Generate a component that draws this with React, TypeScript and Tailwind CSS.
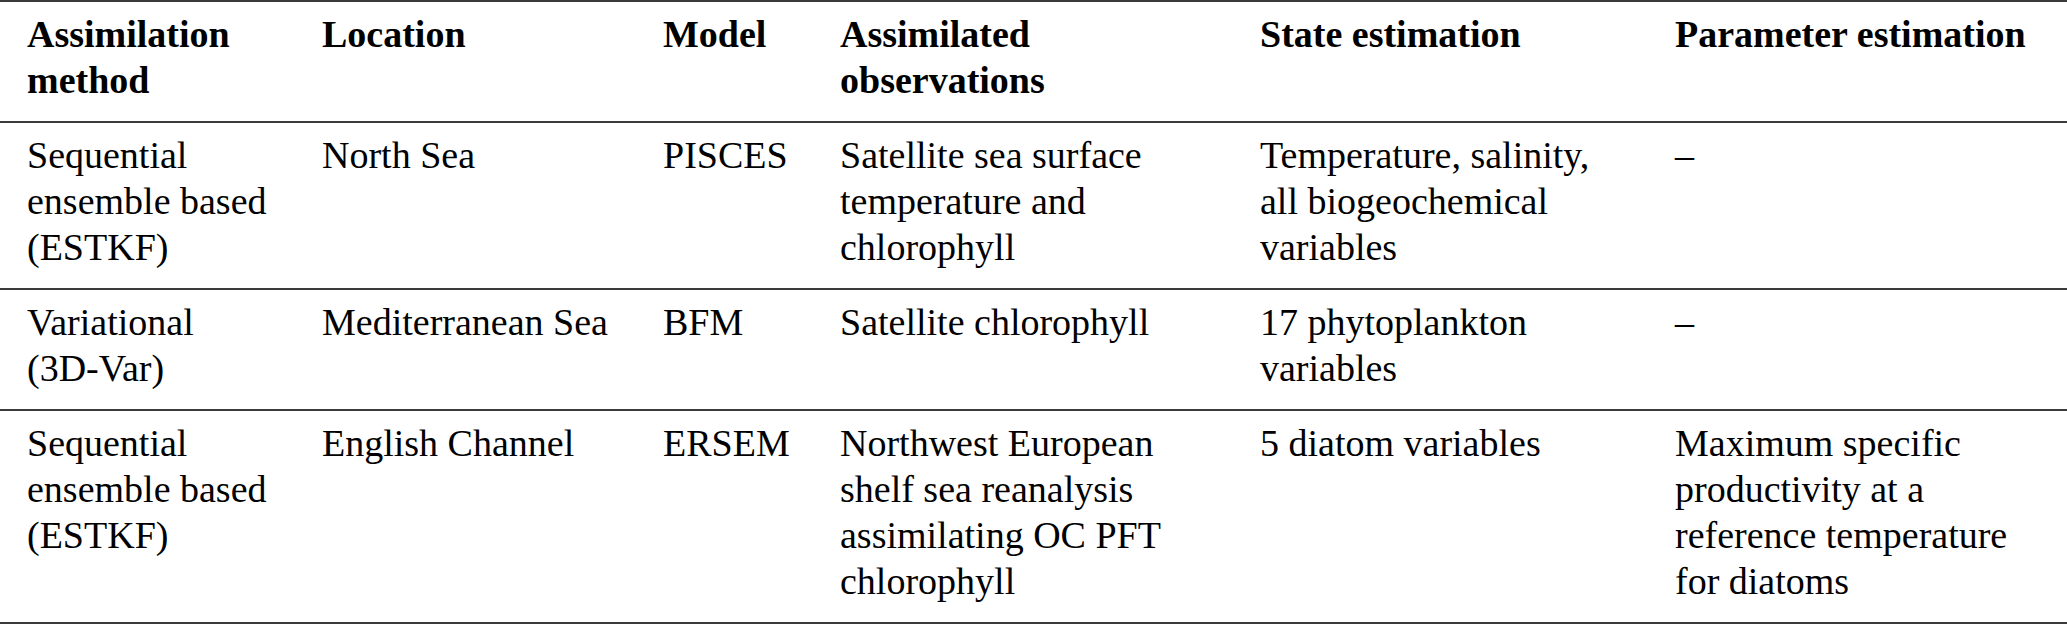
import React from "react";

type Row = { cells: string[][]; header?: boolean };

const rows: Row[] = [
  {
    header: true,
    cells: [
      ["Assimilation", "method"],
      ["Location"],
      ["Model"],
      ["Assimilated", "observations"],
      ["State estimation"],
      ["Parameter estimation"],
    ],
  },
  {
    cells: [
      ["Sequential", "ensemble based", "(ESTKF)"],
      ["North Sea"],
      ["PISCES"],
      ["Satellite sea surface", "temperature and", "chlorophyll"],
      ["Temperature, salinity,", "all biogeochemical", "variables"],
      ["–"],
    ],
  },
  {
    cells: [
      ["Variational", "(3D-Var)"],
      ["Mediterranean Sea"],
      ["BFM"],
      ["Satellite chlorophyll"],
      ["17 phytoplankton", "variables"],
      ["–"],
    ],
  },
  {
    cells: [
      ["Sequential", "ensemble based", "(ESTKF)"],
      ["English Channel"],
      ["ERSEM"],
      ["Northwest European", "shelf sea reanalysis", "assimilating OC PFT", "chlorophyll"],
      ["5 diatom variables"],
      ["Maximum specific", "productivity at a", "reference temperature", "for diatoms"],
    ],
  },
];

export default function App() {
  return (
    <div className="w-[2067px] h-[625px] bg-white overflow-hidden text-black [font-family:Liberation_Serif,Times_New_Roman,serif] text-[38px] leading-[46px]">
      <div className="border-t-2 border-[#3a3a3a]">
        {rows.map((row, ri) => (
          <div
            key={ri}
            className={`grid grid-cols-[295px_341px_177px_420px_415px_1fr] pl-[27px] pt-[9px] pb-[18px] border-b-2 border-[#3a3a3a] ${
              row.header ? "font-bold" : "font-normal"
            }`}
          >
            {row.cells.map((lines, ci) => (
              <div key={ci} className="whitespace-nowrap">
                {lines.map((l, li) => (
                  <div key={li}>{l}</div>
                ))}
              </div>
            ))}
          </div>
        ))}
      </div>
    </div>
  );
}
